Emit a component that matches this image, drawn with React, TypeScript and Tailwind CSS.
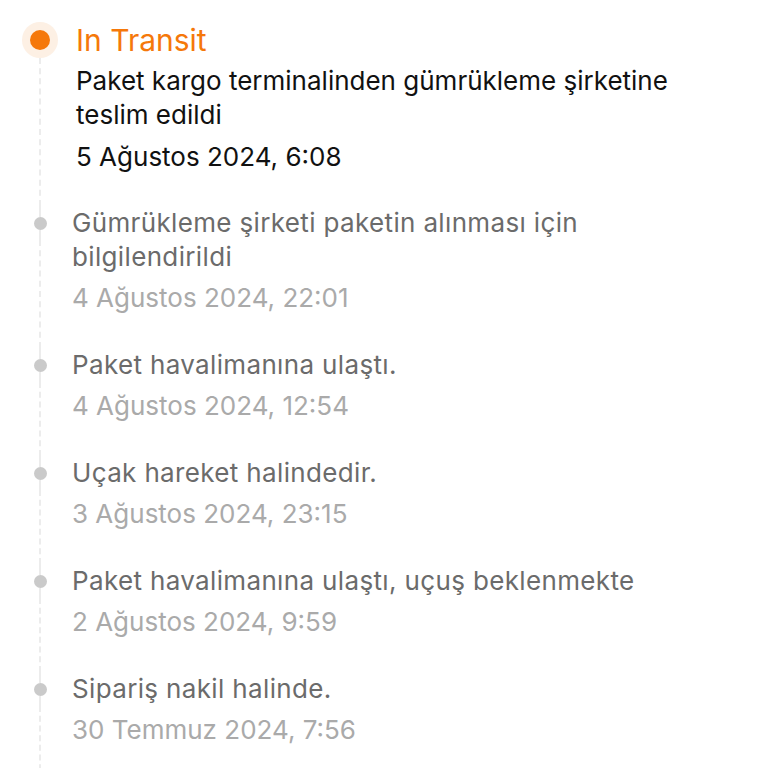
import React from "react";

const items = [
  { title: ["Gümrükleme şirketi paketin alınması için", "bilgilendirildi"], date: "4 Ağustos 2024, 22:01" },
  { title: ["Paket havalimanına ulaştı."], date: "4 Ağustos 2024, 12:54" },
  { title: ["Uçak hareket halindedir."], date: "3 Ağustos 2024, 23:15" },
  { title: ["Paket havalimanına ulaştı, uçuş beklenmekte"], date: "2 Ağustos 2024, 9:59" },
  { title: ["Sipariş nakil halinde."], date: "30 Temmuz 2024, 7:56" },
];

export default function App() {
  return (
    <div
      className="w-[768px] h-[768px] bg-white overflow-hidden pt-[22px]"
      style={{ fontFamily: "Inter, 'Noto Sans', sans-serif" }}
    >
      {/* Active item */}
      <div className="flex">
        <div className="w-[80px] flex flex-col items-center shrink-0">
          <div className="h-[36px] flex items-center justify-center">
            <div className="w-[36px] h-[36px] rounded-full bg-[#fdf0e4] flex items-center justify-center">
              <div className="w-[20px] h-[20px] rounded-full bg-[#f5780a]" />
            </div>
          </div>
          <div className="flex-1 border-l-2 border-dashed border-[#ececec]" />
        </div>
        <div className="-ml-[4px] pb-[32px]">
          <div className="text-[30px] leading-[36px] text-[#f5780a]">In Transit</div>
          <div className="mt-[6px] text-[26px] leading-[34px] text-[#111111]">
            <div>Paket kargo terminalinden gümrükleme şirketine</div>
            <div>teslim edildi</div>
          </div>
          <div className="mt-[8px] text-[26px] leading-[34px] text-[#111111]">5 Ağustos 2024, 6:08</div>
        </div>
      </div>
      {items.map((it, i) => (
        <div key={i} className="flex">
          <div className="w-[80px] flex flex-col items-center shrink-0">
            <div className="h-[34px] flex flex-col items-center">
              <div className="flex-1 border-l-2 border-dashed border-[#ececec]" />
              <div className="w-[13px] h-[13px] rounded-full bg-[#cacaca] shrink-0" />
              <div className="flex-1 border-l-2 border-dashed border-[#ececec]" />
            </div>
            <div className="flex-1 border-l-2 border-dashed border-[#ececec]" />
          </div>
          <div className="-ml-[8px] pb-[33px]">
            <div className="text-[26px] leading-[34px] tracking-[0.35px] text-[#6b6b6b]">
              {it.title.map((t, j) => (
                <div key={j}>{t}</div>
              ))}
            </div>
            <div className="mt-[7px] text-[26px] leading-[34px] text-[#aaaaaa]">{it.date}</div>
          </div>
        </div>
      ))}
    </div>
  );
}
